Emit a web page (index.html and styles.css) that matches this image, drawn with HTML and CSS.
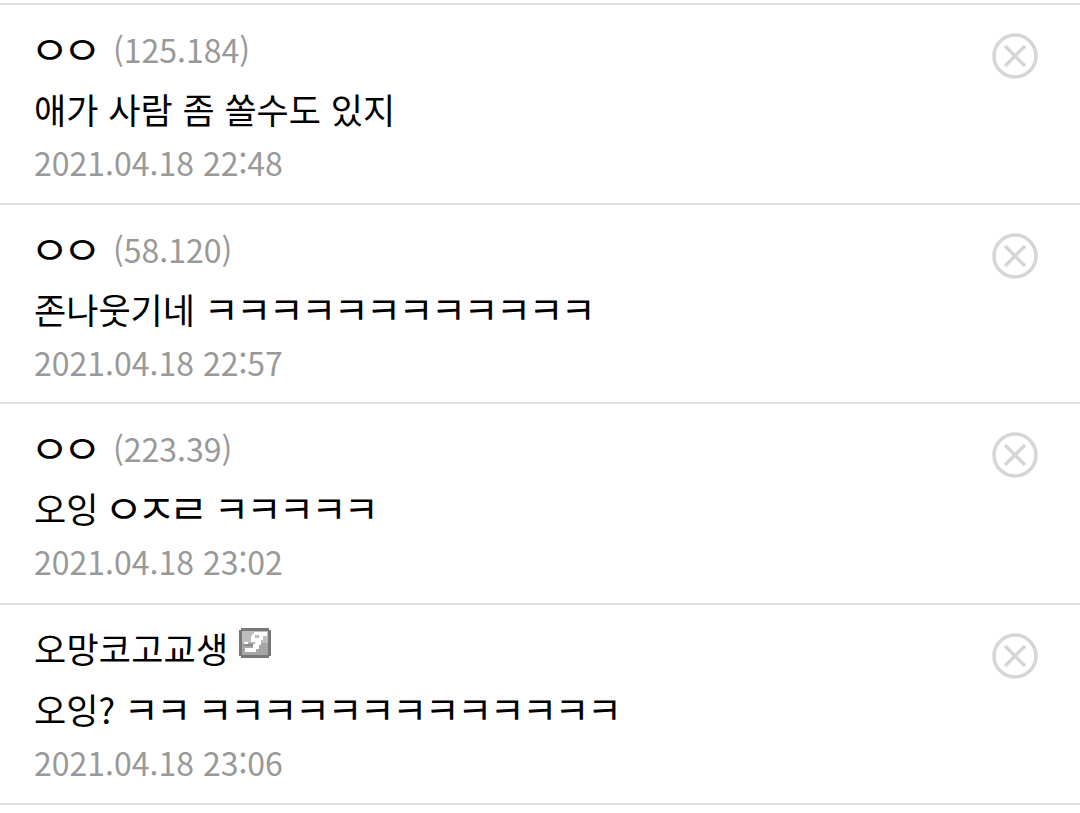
FILE: index.html
```html
<!DOCTYPE html>
<html lang="ko">

<head>
    <meta charset="UTF-8">
    <meta name="viewport" content="width=device-width, initial-scale=1.0">
    <title>댓글</title>
    <link rel="stylesheet" href="styles.css">
</head>

<body>
    <ul class="comment-list">
        <li class="comment">
            <div class="comment-body">
                <div class="writer"><span class="jamo-wide">ㅇㅇ</span><span class="ip">(125.184)</span></div>
                <p class="text">애가 사람 좀 쏠수도 있지</p>
                <div class="date">2021.04.18 22:48</div>
            </div>
            <button class="delete" aria-label="삭제">
                <svg viewBox="0 0 46 46"><circle cx="23" cy="23" r="21" /><path d="M13 13L33 33M33 13L13 33" /></svg>
            </button>
        </li>
        <li class="comment short">
            <div class="comment-body">
                <div class="writer"><span class="jamo-wide">ㅇㅇ</span><span class="ip">(58.120)</span></div>
                <p class="text">존나웃기네 <span class="jamo">ㅋㅋㅋㅋㅋㅋㅋㅋㅋㅋㅋㅋ</span></p>
                <div class="date">2021.04.18 22:57</div>
            </div>
            <button class="delete" aria-label="삭제">
                <svg viewBox="0 0 46 46"><circle cx="23" cy="23" r="21" /><path d="M13 13L33 33M33 13L13 33" /></svg>
            </button>
        </li>
        <li class="comment tall">
            <div class="comment-body">
                <div class="writer"><span class="jamo-wide">ㅇㅇ</span><span class="ip">(223.39)</span></div>
                <p class="text">오잉 <span class="jamo-wide">ㅇㅈㄹ</span> <span class="jamo">ㅋㅋㅋㅋㅋ</span></p>
                <div class="date">2021.04.18 23:02</div>
            </div>
            <button class="delete" aria-label="삭제">
                <svg viewBox="0 0 46 46"><circle cx="23" cy="23" r="21" /><path d="M13 13L33 33M33 13L13 33" /></svg>
            </button>
        </li>
        <li class="comment">
            <div class="comment-body">
                <div class="writer">
                    <span class="nick">오망코고교생</span>
                    <svg class="badge" viewBox="0 0 32 30">
                        <path fill="#777" d="M2 0H30V2H32V28H30V30H2V28H0V2H2z" />
                        <path fill="#bebebe" d="M3 3H29V15H3z" />
                        <path fill="#a6a6a6" d="M3 15H29V27H3z" />
                        <path fill="#fff" d="M15 4H28V8H24V12H22V17H20V21H17V24H6V20H14V18H5V14H9V16H16V14H12V8H13V6H15z" />
                        <path fill="#bebebe" d="M16 7H20V10H16z" />
                        <path fill="#8c8c8c" d="M5 16H14V18H5z" />
                    </svg>
                </div>
                <p class="text">오잉? <span class="jamo">ㅋㅋ</span> <span class="jamo">ㅋㅋㅋㅋㅋㅋㅋㅋㅋㅋㅋㅋㅋ</span></p>
                <div class="date">2021.04.18 23:06</div>
            </div>
            <button class="delete" aria-label="삭제">
                <svg viewBox="0 0 46 46"><circle cx="23" cy="23" r="21" /><path d="M13 13L33 33M33 13L13 33" /></svg>
            </button>
        </li>
    </ul>
</body>

</html>
```
FILE: styles.css
```css
body {
    margin: 0;
    background-color: #fff;
    font-family: "Noto Sans CJK KR", sans-serif;
    font-size: 35px;
    color: #000;
    overflow: hidden;
}

.comment-list {
    list-style: none;
    margin: 0;
    padding: 3px 0 0;
}

.comment {
    display: flex;
    justify-content: space-between;
    box-sizing: border-box;
    height: 200px;
    padding: 14px 42px 0 34px;
    border-top: 2px solid #dfe0e3;
}

.comment.short {
    height: 199px;
}

.comment.tall {
    height: 201px;
}

.comment:last-child {
    height: 202px;
    border-bottom: 2px solid #dfe0e3;
}

.writer {
    display: flex;
    height: 60px;
    line-height: 60px;
}

.nick {
    letter-spacing: 0.2px;
    line-height: 58px;
}

.ip {
    margin-left: 19px;
    font-size: 32px;
    color: #999;
}

.badge {
    width: 32px;
    height: 30px;
    margin: 9px 0 0 11px;
}

.text {
    margin: 0;
    height: 60px;
    line-height: 60px;
    white-space: nowrap;
}

.jamo {
    font-size: 38px;
    letter-spacing: -2.5px;
    line-height: 1;
    margin-left: -1px;
}

.jamo-wide {
    display: inline-block;
    width: 64px;
    font-size: 39px;
    line-height: 56px;
    letter-spacing: -6.4px;
    transform: scaleX(1.1);
    transform-origin: left;
    margin-left: -4px;
}

.text .jamo-wide {
    width: 101px;
    line-height: 1;
}

.date {
    height: 48px;
    line-height: 46px;
    font-size: 32px;
    color: #999;
}

.delete {
    width: 46px;
    height: 46px;
    margin-top: 13.5px;
    padding: 0;
    border: none;
    background: none;
}

.delete svg {
    display: block;
    fill: none;
    stroke: #d5d6d8;
    stroke-width: 3.5;
}
```
